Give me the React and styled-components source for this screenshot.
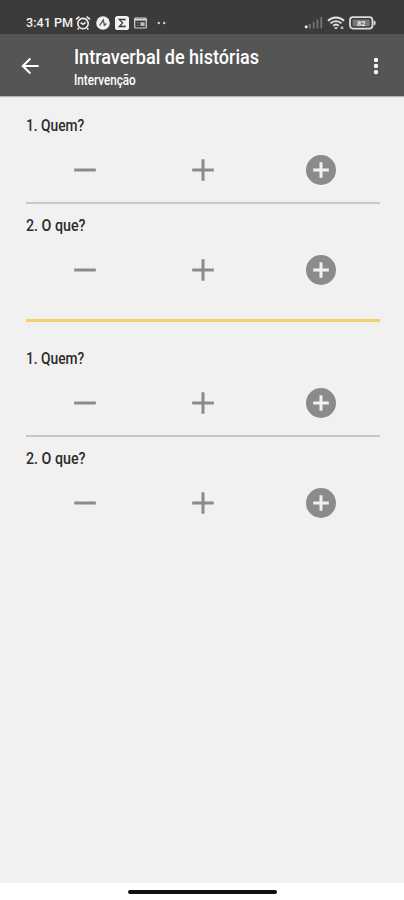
import styled, { createGlobalStyle } from 'styled-components'

const GlobalStyle = createGlobalStyle`
  * {
    box-sizing: border-box;
  }
  body {
    margin: 0;
    font-family: Roboto, "Liberation Sans", sans-serif;
    background: #fff;
  }
`

const Screen = styled.div`
  display: flex;
  flex-direction: column;
  width: 404px;
  height: 900px;
  overflow: hidden;
`

const StatusBar = styled.div`
  display: flex;
  align-items: center;
  justify-content: space-between;
  height: 34px;
  padding: 11px 27px 0 26px;
  background: #3b3b3b;
  color: #f2f2f2;
`

const StatusGroup = styled.div`
  display: flex;
  align-items: center;
  gap: ${props => props.$gap}px;
`

const Squeezed = styled.span`
  display: block;
  white-space: nowrap;
  transform: scaleX(${props => props.$ratio || 1});
  transform-origin: left center;
`

const Clock = styled(Squeezed)`
  width: 48px;
  margin-right: -4px;
  font-size: 13px;
  line-height: 16px;
  font-weight: 500;
`

const AppBar = styled.header`
  display: flex;
  align-items: center;
  height: 62px;
  padding: 2px 16px 0 18px;
  background: #555;
  color: #fff;
  box-shadow: 0 1px 1px rgba(0, 0, 0, .25);
  z-index: 1;
`

const IconButton = styled.button`
  display: flex;
  padding: 0;
  border: 0;
  background: none;
  color: inherit;
`

const Titles = styled.div`
  flex: 1;
  margin-left: 32px;
  padding-top: 3px;
`

const Title = styled(Squeezed).attrs({ as: 'h1' })`
  margin: 0;
  font-size: 20px;
  line-height: 24px;
  font-weight: 500;
`

const Subtitle = styled(Squeezed)`
  font-size: 14px;
  line-height: 22px;
  font-weight: 500;
`

const Content = styled.main`
  flex: 1;
  padding: 8px 24px 0 26px;
  background: #f1f1f1;
`

const Group = styled.section`
  & + & {
    margin-top: 15px;
    border-top: 3px solid #f2d16b;
    padding-top: 15px;
  }
`

const Item = styled.div`
  height: 100px;
  padding-top: 12px;
  &:not(:last-child) {
    border-bottom: 2px solid #c8c8c8;
  }
`

const Question = styled(Squeezed)`
  height: 20px;
  font-size: 16px;
  line-height: 20px;
  font-weight: 500;
  color: #2b2b2b;
`

const Answers = styled.div`
  display: grid;
  grid-template-columns: repeat(3, 1fr);
  justify-items: center;
  margin-top: 16px;
  color: #8b8b8b;
`

const NavBar = styled.div`
  display: flex;
  justify-content: center;
  height: 17px;
  padding-top: 7px;
  background: #fff;
`

const HomeIndicator = styled.div`
  width: 149px;
  height: 4px;
  border-radius: 2px;
  background: #111;
`

const AlarmIcon = () => (
  <svg width="16" height="16" viewBox="0 0 16 16" fill="none" stroke="currentColor" strokeWidth="1.6">
    <circle cx="8" cy="8.6" r="5.2" />
    <path d="M1 4.4 4.4 1.6M15 4.4l-3.4-2.8M3.8 13.2l-1.2 1.4M12.2 13.2l1.2 1.4" />
    <path d="M5.6 7.6 8 9.4l2.6-2" strokeWidth="1.4" />
  </svg>
)

const CompassIcon = () => (
  <svg width="14" height="14" viewBox="0 0 14 14">
    <circle cx="7" cy="7" r="6.8" fill="currentColor" />
    <path d="M3.6 9.6 7.2 4l1.2 5.2 2-1.8" fill="none" stroke="#555" strokeWidth="1.3" />
  </svg>
)

const SigmaIcon = () => (
  <svg width="14" height="14" viewBox="0 0 14 14">
    <rect width="14" height="14" rx="2.6" fill="currentColor" />
    <path d="M10 4.6V3.5H4.3L7.6 7l-3.3 3.5H10V9.4" fill="none" stroke="#3b3b3b" strokeWidth="1.3" />
  </svg>
)

const CardIcon = () => (
  <svg width="13" height="12" viewBox="0 0 13 12">
    <rect x=".7" y="1" width="11.6" height="10" rx="1" fill="none" stroke="#d4d4d4" strokeWidth="1.2" />
    <path d="M1 2.6h11" stroke="#d4d4d4" strokeWidth="2" />
    <rect x="6.4" y="5.2" width="4.2" height="3.8" fill="#bbb" />
    <path d="M3 6h2M3 8.4h2" stroke="#888" />
  </svg>
)

const DotsIcon = () => (
  <svg width="16" height="4" viewBox="0 0 16 4" fill="#d0d0d0">
    <circle cx="6.8" cy="2" r="1.2" />
    <circle cx="12.2" cy="2" r="1.2" />
  </svg>
)

const SignalIcon = () => (
  <svg width="19" height="13" viewBox="0 0 19 13" fill="#777">
    <rect x=".8" y="9.4" width="2.8" height="2.8" rx="1" fill="#f2f2f2" />
    <rect x="5" y="8" width="1.7" height="4.4" />
    <rect x="8.8" y="6" width="1.7" height="6.4" />
    <rect x="12.6" y="3.6" width="1.7" height="8.8" />
    <rect x="16.4" y="1" width="1.7" height="11.4" />
  </svg>
)

const WifiIcon = () => (
  <svg width="18" height="14" viewBox="0 0 18 14" fill="none" stroke="#e4e4e4" strokeWidth="1.9">
    <path d="M1 4.8C5.4.4 12.6.4 17 4.8" />
    <path d="M3.6 7.4c3-3 7.8-3 10.8 0" />
    <path d="M6.2 9.8c1.6-1.5 4-1.5 5.6 0" />
    <path d="m9 13.4-2-2.2h4z" fill="#e4e4e4" stroke="none" />
    <circle cx="15" cy="11.8" r="1.5" fill="#bbb" stroke="none" />
  </svg>
)

const BatteryIcon = () => (
  <svg width="28" height="14" viewBox="0 0 28 14">
    <rect x="1" y="1.2" width="22.4" height="11.4" rx="3" fill="none" stroke="#dcdcdc" strokeWidth="1.8" />
    <path d="M24.6 4.2c2.8.6 2.8 4.8 0 5.4z" fill="#dcdcdc" />
    <rect x="3.6" y="3.6" width="17.2" height="6.6" rx="1" fill="#777" />
    <text x="12.2" y="9.7" textAnchor="middle" fontSize="7.5" fontWeight="700" fill="#eee">82</text>
  </svg>
)

const BackIcon = () => (
  <svg width="24" height="24" viewBox="0 0 24 24" fill="none" stroke="currentColor" strokeWidth="2.1">
    <path d="M20.6 12H5.2M12.4 4.4 4.8 12l7.6 7.6" />
  </svg>
)

const MoreIcon = () => (
  <svg width="24" height="24" viewBox="0 0 24 24" fill="currentColor">
    <circle cx="12" cy="5.9" r="2.2" />
    <circle cx="12" cy="12" r="2.2" />
    <circle cx="12" cy="18.1" r="2.2" />
  </svg>
)

const icons = {
  wrong: 'M4.8 11h14.4v2H4.8z',
  right: 'M4.8 11H11V4.8h2V11h6.2v2H13v6.2h-2V13H4.8z',
  bonus: 'M12 2a10 10 0 1 0 0 20 10 10 0 0 0 0-20zm5.2 11H13v4.2h-2V13H6.8v-2H11V6.8h2V11h4.2z',
}

const AnswerIcon = ({ name }) => (
  <svg width="36" height="36" viewBox="0 0 24 24" fill="currentColor">
    <path d={icons[name]} />
  </svg>
)

const questions = [
  { text: '1. Quem?', ratio: .86 },
  { text: '2. O que?', ratio: .89 },
]

function QuestionGroup() {
  return (
    <Group>
      {questions.map(({ text, ratio }) => (
        <Item key={text}>
          <Question $ratio={ratio}>{text}</Question>
          <Answers>
            {Object.keys(icons).map(name => (
              <IconButton key={name} aria-label={name}>
                <AnswerIcon name={name} />
              </IconButton>
            ))}
          </Answers>
        </Item>
      ))}
    </Group>
  )
}

export default function App() {
  return (
    <Screen>
      <GlobalStyle />
      <StatusBar>
        <StatusGroup $gap={5}>
          <Clock $ratio={.97}>3:41 PM</Clock>
          <AlarmIcon />
          <CompassIcon />
          <SigmaIcon />
          <CardIcon />
          <DotsIcon />
        </StatusGroup>
        <StatusGroup $gap={4}>
          <SignalIcon />
          <WifiIcon />
          <BatteryIcon />
        </StatusGroup>
      </StatusBar>
      <AppBar>
        <IconButton aria-label="Voltar"><BackIcon /></IconButton>
        <Titles>
          <Title $ratio={.903}>Intraverbal de histórias</Title>
          <Subtitle $ratio={.835}>Intervenção</Subtitle>
        </Titles>
        <IconButton aria-label="Menu"><MoreIcon /></IconButton>
      </AppBar>
      <Content>
        <QuestionGroup />
        <QuestionGroup />
      </Content>
      <NavBar>
        <HomeIndicator />
      </NavBar>
    </Screen>
  )
}
